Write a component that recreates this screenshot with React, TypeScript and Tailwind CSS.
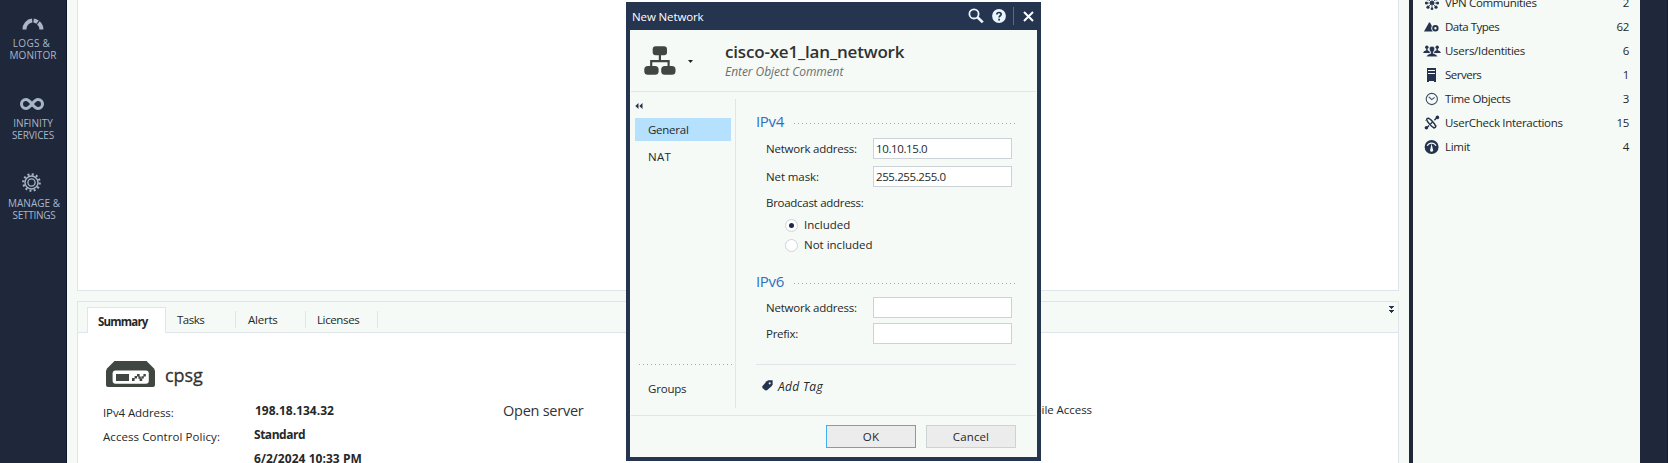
import React from "react";

const DOTS =
  "h-px bg-[repeating-linear-gradient(90deg,#a3a9ae_0_1px,transparent_1px_4px)]";

function GaugeIcon() {
  return (
    <svg width="22" height="12" viewBox="0 0 22 12" fill="none" stroke="#a9b6c6" strokeWidth="4">
      <path d="M2.5 11.5 A8.5 8.5 0 0 1 10.2 2.6" />
      <path d="M11.6 2.6 A8.5 8.5 0 0 1 15.6 4.2" />
      <path d="M16.4 4.9 A8.5 8.5 0 0 1 19.4 11.5" />
    </svg>
  );
}

function InfinityIcon() {
  return (
    <svg width="24" height="12" viewBox="0 0 24 12" fill="none" stroke="#a9b6c6" strokeWidth="3">
      <path d="M12 6 C9.6 3 8.2 1.5 6 1.5 a4.5 4.5 0 0 0 0 9 C8.2 10.5 9.6 9 12 6 S15.8 1.5 18 1.5 a4.5 4.5 0 0 1 0 9 C15.8 10.5 14.4 9 12 6 Z" />
    </svg>
  );
}

function GearIcon() {
  return (
    <svg width="19" height="19" viewBox="0 0 19 19" fill="none" stroke="#a9b6c6">
      <circle cx="9.5" cy="9.5" r="8.2" strokeWidth="2.2" strokeDasharray="2 2.293" />
      <circle cx="9.5" cy="9.5" r="6.5" strokeWidth="1.4" />
      <circle cx="9.5" cy="9.5" r="3.6" strokeWidth="1.3" />
    </svg>
  );
}

const COLOR = "#25334f";

function VpnIcon() {
  return (
    <svg width="16" height="16" viewBox="0 0 16 16" fill={COLOR}>
      <path d="M4.5 4.5 L11.5 11.5 M11.5 4.5 L4.5 11.5 M3 8 H13 M8 3 V13" stroke={COLOR} strokeWidth="0.8" />
      <circle cx="8" cy="8" r="2.1" />
      <circle cx="4" cy="3.8" r="1.6" />
      <circle cx="12" cy="3.8" r="1.6" />
      <circle cx="4" cy="12.2" r="1.6" />
      <circle cx="12" cy="12.2" r="1.6" />
      <circle cx="2.4" cy="8" r="1.5" />
      <circle cx="13.6" cy="8" r="1.5" />
      <circle cx="8" cy="13.8" r="1.3" />
      <circle cx="8" cy="2.2" r="1.3" />
    </svg>
  );
}

function DataIcon() {
  return (
    <svg width="16" height="16" viewBox="0 0 16 16">
      <path d="M0 12.5 L5 3.6 L6 3.6 L11 12.5 Z" fill={COLOR} />
      <circle cx="11.4" cy="9.3" r="4.2" fill="#f5faf6" />
      <circle cx="11.4" cy="9.3" r="2.2" fill="none" stroke={COLOR} strokeWidth="2" />
    </svg>
  );
}

function UsersIcon() {
  return (
    <svg width="18" height="16" viewBox="-1 0 18 16" fill={COLOR}>
      <circle cx="2.8" cy="4.2" r="1.7" />
      <circle cx="13.2" cy="4.2" r="1.7" />
      <path d="M2.2 5.5 h1.4 v1.8 C5 7.8 5.8 8.4 6 10 H-0.8 C-0.6 8.4 0.6 7.8 2.2 7.3 Z" />
      <path d="M12.5 5.5 h1.4 v1.8 C15.4 7.8 16.6 8.4 16.8 10 H10 C10.2 8.4 11 7.8 12.5 7.3 Z" />
      <path d="M5.4 5.6 C5.4 2.6 10.6 2.6 10.6 5.6 C10.6 7.4 9.8 8.4 9.3 9 V10.4 C11.8 11 13.2 12 13.4 13.7 H2.6 C2.8 12 4.2 11 6.7 10.4 V9 C6.2 8.4 5.4 7.4 5.4 5.6 Z" stroke="#f5faf6" strokeWidth="0.5" />
    </svg>
  );
}

function ServerIcon() {
  return (
    <svg width="16" height="16" viewBox="0 0 16 16" fill={COLOR} shapeRendering="crispEdges">
      <path d="M3 1 h9 v14 h-2 v-1 h-5 v1 H3 Z" />
      <path d="M4 3 h7 v1 h-7 Z M4 6 h7 v1 h-7 Z" fill="#f5faf6" />
    </svg>
  );
}

function ClockIcon() {
  return (
    <svg width="16" height="16" viewBox="0 0 16 16" fill="none" stroke="#3f4c66">
      <circle cx="7.8" cy="8" r="5.6" strokeWidth="1.1" />
      <path d="M4.8 5.8 L7.8 8.6 L10.6 6.4" strokeWidth="1.1" />
    </svg>
  );
}

function InteractionIcon() {
  return (
    <svg width="16" height="16" viewBox="0 0 16 16" fill="none" stroke={COLOR}>
      <ellipse cx="7.2" cy="8" rx="2" ry="6" transform="rotate(-42 7.2 8)" strokeWidth="1.5" />
      <path d="M2.6 13 L5 10.6 M6.4 9 L8.4 7.2 M10.4 5.2 L13 2.6" strokeWidth="1.4" />
      <path d="M1.6 5.4 L4.2 2.8 M9.8 13.6 L12.6 10.6" strokeWidth="1" />
      <circle cx="13.4" cy="2.4" r="1.8" fill={COLOR} stroke="none" />
      <circle cx="2.4" cy="12.8" r="1.8" fill={COLOR} stroke="none" />
    </svg>
  );
}

function LimitIcon() {
  return (
    <svg width="16" height="16" viewBox="0 0 16 16">
      <circle cx="7.6" cy="8" r="7" fill={COLOR} />
      <path d="M3.2 6.8 A5 5 0 0 1 12 6.8" fill="none" stroke="#f5faf6" strokeWidth="1.2" />
      <path d="M7.6 4.6 L8.8 10 A1.6 1.6 0 1 1 6.4 10 Z" fill="#f5faf6" />
    </svg>
  );
}

function SideItem({ icon, children }: { icon: React.ReactNode; children: React.ReactNode }) {
  return (
    <div className="flex flex-col items-center text-center text-[10px] leading-[12px] text-[#a9b6c6]">
      {icon}
      {children}
    </div>
  );
}

const OBJECTS = [
  { icon: <VpnIcon />, label: "VPN Communities", count: "2", t: "tracking-[-0.35px]" },
  { icon: <DataIcon />, label: "Data Types", count: "62", t: "tracking-[-0.5px]" },
  { icon: <UsersIcon />, label: "Users/Identities", count: "6", t: "tracking-[-0.28px]" },
  { icon: <ServerIcon />, label: "Servers", count: "1", t: "tracking-[-0.5px]" },
  { icon: <ClockIcon />, label: "Time Objects", count: "3", t: "tracking-[-0.37px]" },
  { icon: <InteractionIcon />, label: "UserCheck Interactions", count: "15", t: "tracking-[-0.3px]" },
  { icon: <LimitIcon />, label: "Limit", count: "4", t: "tracking-[-0.3px]" },
];

function Heading({ children }: { children: string }) {
  return (
    <div className="flex h-[18px] items-start justify-between">
      <span className="text-[15px] leading-[18px] tracking-[-0.35px] text-[#2f6fc4]">{children}</span>
      <div className={`mt-[11px] w-[222px] ${DOTS}`} />
    </div>
  );
}

function Field({ label, t, value }: { label: string; t: string; value?: React.ReactNode }) {
  return (
    <div className="flex h-[21px] items-center pl-[10px] pr-[4px]">
      <span className={`flex-1 ${t}`}>{label}</span>
      <div className="flex h-[21px] w-[139px] items-center border border-[#cdd2d8] bg-white pl-[2px]">{value}</div>
    </div>
  );
}

function Radio({ checked }: { checked?: boolean }) {
  return (
    <span className="flex size-[13px] items-center justify-center rounded-full border border-[#ced3da] bg-white">
      {checked && <span className="size-[5px] rounded-full bg-[#1c2a48]" />}
    </span>
  );
}

function Dialog() {
  return (
    <div className="absolute top-[2px] left-[626px] flex h-[459px] w-[415px] flex-col bg-[#25344f] px-[4px] pb-[4px]">
      <div className="flex h-[28px] shrink-0 items-center pl-[2px] text-white">
        <span className="mt-[2px] flex-1 tracking-[-0.12px]">New Network</span>
        <svg className="mr-[8px]" width="16" height="16" viewBox="0 0 16 16" fill="none" stroke="#eaf4ff">
          <circle cx="6" cy="5.9" r="4.6" strokeWidth="1.8" />
          <path d="M9.5 9.3 L14.8 14.4" strokeWidth="2.6" />
        </svg>
        <svg width="14" height="14" viewBox="0 0 14 14">
          <circle cx="7" cy="7" r="6.9" fill="#eaf4ff" />
          <path d="M4.9 5.4 C4.9 2.9 9.2 2.9 9.2 5.3 C9.2 6.8 7.1 6.8 7.1 8.6" fill="none" stroke="#25344f" strokeWidth="1.7" />
          <path d="M6.2 9.7 h1.8 v1.7 h-1.8 Z" fill="#25344f" />
        </svg>
        <span className="mr-[9px] ml-[7px] h-[18px] w-px bg-[#5d6980]" />
        <svg className="mr-[3px]" width="11" height="11" viewBox="0 0 11 11" stroke="#fff" strokeWidth="2">
          <path d="M1 1 L10 10 M10 1 L1 10" />
        </svg>
      </div>

      <div className="flex min-h-0 flex-1 flex-col bg-[#f5faf6] px-px">
        <div className="flex h-[62px] shrink-0 border-b border-[#e0e5eb]">
          <svg className="mt-[16px] ml-[13px]" width="32" height="29" viewBox="0 0 32 29" fill="#404640">
            <rect x="8.7" y="0.3" width="14.3" height="9" rx="3" />
            <rect x="0.3" y="20" width="14.3" height="8.8" rx="3.6" />
            <rect x="17.2" y="20" width="14.3" height="8.8" rx="3.6" />
            <path d="M7.2 20 V15.2 H24.6 V20 M15.9 9 V15.2" fill="none" stroke="#404640" strokeWidth="2.2" />
          </svg>
          <svg className="mt-[30px] ml-[12px]" width="5" height="3" viewBox="0 0 5 3" fill="#222">
            <path d="M0 0 H5 L2.5 3 Z" />
          </svg>
          <div className="mt-[10px] ml-[32px]">
            <div className="text-[17px] leading-[24px] font-semibold tracking-[-0.18px] text-[#303232]">
              cisco-xe1_lan_network
            </div>
            <div className="text-[12px] leading-[15px] tracking-[-0.06px] text-[#6c706e] italic">Enter Object Comment</div>
          </div>
        </div>

        <div className="flex min-h-0 flex-1">
          <div className="flex w-[104px] shrink-0 flex-col pt-[11px] pl-[4px]">
            <svg width="8" height="6" viewBox="0 0 8 6" fill={COLOR}>
              <path d="M3.5 0 V6 L0.3 3 Z M7.5 0 V6 L4.3 3 Z" />
            </svg>
            <div className="mt-[9px] flex h-[23px] w-[96px] items-center bg-[#b5e1ff] pl-[13px] tracking-[-0.25px]">General</div>
            <div className="mt-[4px] flex h-[23px] items-center pl-[13px] tracking-[0.3px]">NAT</div>
            <div className={`mt-auto ml-[4px] w-[94px] ${DOTS}`} />
            <div className="mt-[12px] mb-[14px] flex h-[24px] items-center pl-[13px] tracking-[-0.2px]">Groups</div>
          </div>
          <div className="mt-[7px] mb-[7px] w-px bg-[#e0e5eb]" />
          <div className="flex flex-1 flex-col pt-[20px] pr-[20px] pl-[20px]">
            <Heading>IPv4</Heading>
            <div className="mt-[8px] flex flex-col gap-[7px]">
              <Field label="Network address:" t="tracking-[-0.22px]" value={<span className="tracking-[-0.38px]">10.10.15.0</span>} />
              <Field label="Net mask:" t="tracking-[-0.1px]" value={<span className="tracking-[-0.4px]">255.255.255.0</span>} />
            </div>
            <div className="mt-[5px] flex h-[21px] items-center pl-[10px] tracking-[-0.28px]">Broadcast address:</div>
            <div className="mt-[2px] flex h-[20px] items-center gap-[6px] pl-[29px]">
              <Radio checked />
              <span>Included</span>
            </div>
            <div className="flex h-[20px] items-center gap-[6px] pl-[29px]">
              <Radio />
              <span>Not included</span>
            </div>
            <div className="mt-[17px]">
              <Heading>IPv6</Heading>
            </div>
            <div className="mt-[7px] flex flex-col gap-[5px]">
              <Field label="Network address:" t="tracking-[-0.22px]" />
              <Field label="Prefix:" t="tracking-[-0.27px]" />
            </div>
            <div className="mt-[20px] h-px bg-[#e0e5eb]" />
            <div className="mt-[11px] flex h-[21px] items-center pl-[6px]">
              <svg className="-mt-[2px]" width="11" height="11" viewBox="0 0 11 11">
                <path d="M0.4 6.3 L4.6 1.2 L6.4 0.3 H10.6 V4.4 L9.8 6 L5 10.3 L3.4 10.6 L0.4 8 Z" fill={COLOR} />
                <circle cx="7.7" cy="3.3" r="1.1" fill="#dfe8f2" />
              </svg>
              <span className="ml-[5px] text-[12px] tracking-[0.32px] italic">Add Tag</span>
            </div>
          </div>
        </div>

        <div className="flex h-[42px] shrink-0 justify-end gap-[10px] border-t border-[#e0e5eb] pt-[9px] pr-[20px]">
          <div className="flex h-[23px] w-[90px] items-center justify-center border border-[#41aef5] bg-[#ececec] tracking-[0.2px]">OK</div>
          <div className="flex h-[23px] w-[90px] items-center justify-center border border-[#cdd2d4] bg-[#ececec] tracking-[0.12px]">Cancel</div>
        </div>
      </div>
    </div>
  );
}

export default function App() {
  return (
    <div className="relative flex h-[463px] w-[1668px] overflow-hidden bg-[#f5faf6] font-['Open_Sans','Noto_Sans',sans-serif] text-[11.5px] leading-[16px] whitespace-nowrap text-[#252829]">
      <nav className="flex w-[67px] shrink-0 flex-col border-r border-[#0e1729] bg-[#1f283b] pt-[18px]">
        <SideItem icon={<div className="mr-[1px] mb-[7px]"><GaugeIcon /></div>}>
          <span className="pr-[3px] tracking-[0.28px]">LOGS &amp;</span>
          <span className="tracking-[0.06px]">MONITOR</span>
        </SideItem>
        <div className="h-[37px]" />
        <SideItem icon={<div className="mr-[2px] mb-[7px]"><InfinityIcon /></div>}>
          <span>INFINITY</span>
          <span className="tracking-[-0.16px]">SERVICES</span>
        </SideItem>
        <div className="h-[32px]" />
        <SideItem icon={<div className="mr-[3px] mb-[5px]"><GearIcon /></div>}>
          <span className="pl-[2px]">MANAGE &amp;</span>
          <span className="pl-[2px] tracking-[-0.26px]">SETTINGS</span>
        </SideItem>
      </nav>

      <main className="flex w-[1342px] shrink-0 flex-col pr-[10px] pl-[10px]">
        <div className="h-[291px] shrink-0 border-x border-b border-[#e0e5eb] bg-white" />
        <div className="mt-[10px] flex flex-1 flex-col border-x border-t border-[#e0e5eb] bg-white">
          <div className="flex h-[31px] shrink-0 bg-[#f5faf6]">
            <div className="w-[9px] border-b border-[#e0e5eb]" />
            <div className="mt-[5px] flex w-[79px] border-x border-t border-[#e0e5eb] bg-white pt-[6px] pl-[10px] font-bold tracking-[-0.8px]">Summary</div>
            <div className="flex flex-1 border-b border-[#e0e5eb] pt-[9px] leading-[17px]">
              <div className="h-[17px] w-[70px] border-r border-[#e0e5eb] pl-[11px] tracking-[-0.52px]">Tasks</div>
              <div className="h-[17px] w-[70px] border-r border-[#e0e5eb] pl-[12px] tracking-[-0.23px]">Alerts</div>
              <div className="h-[17px] w-[72px] border-r border-[#e0e5eb] pl-[11px] tracking-[-0.38px]">Licenses</div>
              <svg className="-mt-[5px] mr-[4px] ml-auto" width="5" height="7" viewBox="0 0 5 7" fill={COLOR} shapeRendering="crispEdges">
                <path d="M0 0 H5 V1 H4 V2 H3 V3 H2 V2 H1 V1 H0 Z M0 4 H5 V5 H4 V6 H3 V7 H2 V6 H1 V5 H0 Z" />
              </svg>
            </div>
          </div>
          <div className="mt-[28px] flex h-[26px] shrink-0 items-center pl-[28px]">
            <svg width="49" height="26" viewBox="0 0 49 26">
              <path d="M8.5 0 H40.5 L48 7.5 L49 10 V24 A2 2 0 0 1 47 26 H2 A2 2 0 0 1 0 24 V10 L1 7.5 Z" fill="#404640" />
              <rect x="6.6" y="9.6" width="36.2" height="13.2" rx="3" fill="#fff" />
              <rect x="10" y="13" width="13" height="7" fill="#404640" />
              <path d="M26 17 h2.6 v3 h-2.6 Z M28.6 15 h2.4 v2.4 h-2.4 Z M31 13 h2.6 v2.4 h-2.6 Z M32.4 15.4 h2.4 v2.4 h-2.4 Z M33.6 17.6 h2.6 v2.4 h-2.6 Z M35.4 15.2 h2.4 v2.4 h-2.4 Z M37.4 13 h2.4 v2.6 h-2.4 Z" fill="#404640" />
            </svg>
            <span className="mt-[2px] ml-[10px] text-[18px] leading-[24px] font-medium tracking-[-0.1px] text-[#333] [-webkit-text-stroke:0.3px_#333]">cpsg</span>
          </div>
          <div className="mt-[11px] grid h-[64px] shrink-0 grid-cols-[152px_248px_1fr] pl-[25px]">
            <div className="mt-[3px] leading-[24px]">
              <div className="tracking-[-0.1px]">IPv4 Address:</div>
              <div className="tracking-[0.07px]">Access Control Policy:</div>
            </div>
            <div className="mt-px text-[12px] leading-[24px] font-bold">
              <div>198.18.134.32</div>
              <div className="-ml-px tracking-[-0.48px]">Standard</div>
              <div className="-ml-px tracking-[0.05px]">6/2/2024 10:33 PM</div>
            </div>
            <div className="flex leading-[24px]">
              <span className="mt-px w-[513px] text-[14.5px] tracking-[-0.25px] text-[#333]">Open server</span>
              <span className="w-[76px] text-right tracking-[-0.05px]">Mobile Access</span>
            </div>
          </div>
        </div>
      </main>

      <aside className="flex w-[231px] shrink-0 flex-col border-l-4 border-[#1f283b] bg-[#f5faf6]">
        <div className="-mt-[9px] flex flex-col pr-[11px] pl-[11px]">
          {OBJECTS.map((o) => (
            <div key={o.label} className="flex h-[24px] items-center">
              <span className="flex w-[21px] justify-start [&>svg]:shrink-0 [&>svg[width='18']]:-ml-px">{o.icon}</span>
              <span className={`flex-1 ${o.t}`}>{o.label}</span>
              <span className="tracking-[-0.3px]">{o.count}</span>
            </div>
          ))}
        </div>
      </aside>
      <div className="flex-1 border-r border-[#161c2a] bg-[#1f283b]" />

      <Dialog />
    </div>
  );
}
